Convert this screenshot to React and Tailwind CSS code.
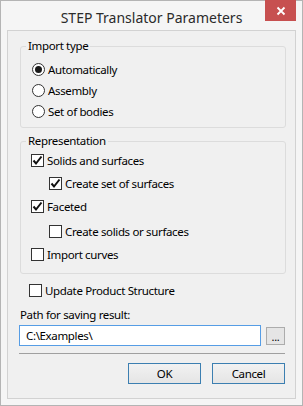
import { useState } from 'react'

const font = { fontFamily: '"Noto Sans", "Open Sans", sans-serif' }

function Radio({ checked, label }) {
  return (
    <div className="flex items-center h-[21px] pl-[11px]">
      <span className="w-[13px] h-[13px] rounded-full border border-[#333] bg-white flex items-center justify-center">
        {checked && <span className="w-[7px] h-[7px] rounded-full bg-[#1a1a1a]" />}
      </span>
      <span className="ml-[3px] text-[11.5px] text-black">{label}</span>
    </div>
  )
}

function Check({ checked, label, indent }) {
  return (
    <div className={`flex items-center h-[23px] ${indent ? 'pl-[28px]' : 'pl-[10px]'}`}>
      <span className="w-[13px] h-[13px] border border-[#333] bg-white flex items-center justify-center">
        {checked && (
          <svg width="11" height="11" viewBox="0 0 11 11">
            <path d="M1.5 5.5 L4 8.5 L9.5 1.5" fill="none" stroke="#111" strokeWidth="2" />
          </svg>
        )}
      </span>
      <span className="ml-[3px] text-[11.5px] text-black">{label}</span>
    </div>
  )
}

export default function App() {
  const [path, setPath] = useState('C:\\Examples\\')

  return (
    <div style={font} className="w-[303px] h-[406px] bg-[#f5f5f5] border border-[#b4b4b4] flex flex-col">
      <div className="relative h-[29px] flex items-center justify-center">
        <span className="text-[14px] text-[#2b2b2b] mt-[4px]">STEP Translator Parameters</span>
        <div className="absolute -top-px right-[6px] w-[31px] h-[21px] bg-[#c75050] flex items-center justify-center">
          <svg width="10" height="10" viewBox="0 0 10 10">
            <path d="M1.5 1.5 L8.5 8.5 M8.5 1.5 L1.5 8.5" stroke="#fff" strokeWidth="1.8" />
          </svg>
        </div>
      </div>

      <div className="mx-[6px] h-[369px] border border-[#d2d2d2] bg-[#f0f0f0] pl-[12px] pr-[9px] pt-[7px] tracking-[-0.35px]">
        <fieldset className="border border-[#dcdcdc] rounded-[3px] px-0 pb-[5px]">
          <legend className="ml-[5px] px-[2px] text-[11.5px] leading-[16px] text-black">Import type</legend>
          <div className="mt-[5px]">
            <Radio checked label="Automatically" />
            <Radio label="Assembly" />
            <Radio label="Set of bodies" />
          </div>
        </fieldset>

        <fieldset className="mt-[5px] border border-[#dcdcdc] rounded-[3px] px-0 pb-[7px]">
          <legend className="ml-[5px] px-[2px] text-[11.5px] leading-[16px] text-black">Representation</legend>
          <Check checked label="Solids and surfaces" />
          <Check checked indent label="Create set of surfaces" />
          <Check checked label="Faceted" />
          <div className="mt-[2px]">
            <Check indent label="Create solids or surfaces" />
          </div>
          <Check label="Import curves" />
        </fieldset>

        <div className="mt-[5px] -ml-[1px]">
          <Check label="Update Product Structure" />
        </div>

        <div className="mt-[5px] text-[11.5px] leading-[16px] text-black">Path for saving result:</div>

        <div className="mt-[2px] flex items-center -ml-px">
          <div className="w-[242px] h-[21px] border border-[#569de5] bg-white flex items-center pl-[6px] text-[11.5px] text-black">
            <input
              value={path}
              onChange={(e) => setPath(e.target.value)}
              className="w-full outline-none bg-transparent"
            />
          </div>
          <button className="ml-[5px] w-[19px] h-[18px] border border-[#acacac] bg-[#e5e5e5] text-[11px] leading-[10px] text-black flex items-start justify-center pt-[4px]">
            ...
          </button>
        </div>

        <div className="mt-[7px] -ml-px h-px w-[266px] bg-[#a0a0a0]" />

        <div className="mt-[9px] flex justify-end gap-[11px] pr-[1px]">
          <button className="w-[73px] h-[21px] border border-[#3c7fb1] bg-gradient-to-b from-[#f2f2f2] to-[#e5e5e5] text-[11.5px] text-black">
            OK
          </button>
          <button className="w-[73px] h-[21px] border border-[#3c7fb1] bg-gradient-to-b from-[#f2f2f2] to-[#e5e5e5] text-[11.5px] text-black">
            Cancel
          </button>
        </div>
      </div>
    </div>
  )
}
